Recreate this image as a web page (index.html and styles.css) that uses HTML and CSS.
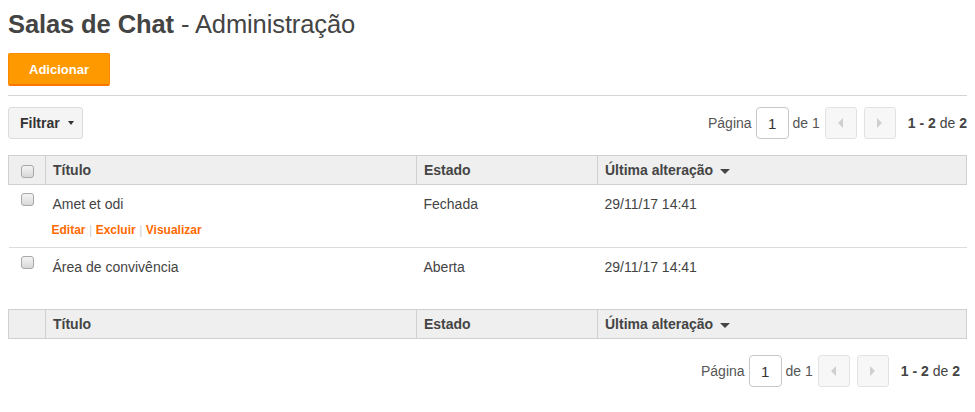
FILE: index.html
```html
<!DOCTYPE html>
<html lang="pt">
<head>
<meta charset="utf-8">
<title>Salas de Chat - Administração</title>
<link rel="stylesheet" href="styles.css">
</head>
<body>
<h1 class="title"><b>Salas de Chat</b> - Administração</h1>
<div class="actions-bar"><button class="btn-add">Adicionar</button></div>
<hr class="sep">
<div class="toolbar">
  <button class="btn-filter">Filtrar <span class="caret"></span></button>
  <div class="pager">
    <span class="lbl">Página</span>
    <span class="page-input">1</span>
    <span class="lbl">de 1</span>
    <span class="nav prev"><span class="tri-left"></span></span>
    <span class="nav next"><span class="tri-right"></span></span>
    <span class="count"><b>1 - 2</b> de <b>2</b></span>
  </div>
</div>
<table class="grid">
  <thead>
    <tr>
      <th class="c-check"><span class="cb"></span></th>
      <th class="c-title">Título</th>
      <th class="c-state">Estado</th>
      <th class="c-date">Última alteração <span class="sort"></span></th>
    </tr>
  </thead>
  <tbody>
    <tr>
      <td class="c-check"><span class="cb"></span></td>
      <td class="c-title">
        <div class="line">Amet et odi</div>
        <div class="row-actions"><a>Editar</a><span class="bar">|</span><a>Excluir</a><span class="bar">|</span><a>Visualizar</a></div>
      </td>
      <td><div class="line">Fechada</div></td>
      <td><div class="line">29/11/17 14:41</div></td>
    </tr>
    <tr class="last">
      <td class="c-check"><span class="cb"></span></td>
      <td class="c-title">
        <div class="line">Área de convivência</div>
        <div class="row-actions hidden"><a>Editar</a><span class="bar">|</span><a>Excluir</a><span class="bar">|</span><a>Visualizar</a></div>
      </td>
      <td><div class="line">Aberta</div></td>
      <td><div class="line">29/11/17 14:41</div></td>
    </tr>
  </tbody>
  <tfoot>
    <tr>
      <th class="c-check"></th>
      <th class="c-title">Título</th>
      <th class="c-state">Estado</th>
      <th class="c-date">Última alteração <span class="sort"></span></th>
    </tr>
  </tfoot>
</table>
<div class="toolbar bottom">
  <div class="pager">
    <span class="lbl">Página</span>
    <span class="page-input">1</span>
    <span class="lbl">de 1</span>
    <span class="nav prev"><span class="tri-left"></span></span>
    <span class="nav next"><span class="tri-right"></span></span>
    <span class="count"><b>1 - 2</b> de <b>2</b></span>
  </div>
</div>
</body>
</html>
```
FILE: styles.css
```css
html, body { background: #fff; }
body {
  margin: 8px;
  font-family: "Liberation Sans", Arial, sans-serif;
  color: #444;
  font-size: 14px;
}
.title {
  margin: 0;
  font-size: 25.5px;
  line-height: 32px;
  font-weight: normal;
  color: #444;
  letter-spacing: -0.1px;
}
.title b { font-weight: bold; color: #444; }
.actions-bar { margin-top: 13px; }
.btn-add {
  display: block;
  width: 102px;
  height: 33px;
  background: #ff9900;
  border: 1px solid #fb8a00;
  border-bottom: 2px solid #ff7400;
  border-radius: 2px;
  color: #fff;
  font-family: "Liberation Sans", Arial, sans-serif;
  font-weight: bold;
  font-size: 13px;
  padding: 0;
}
.sep {
  margin: 9px 0 0;
  border: 0;
  border-top: 1px solid #d4d4d4;
  height: 0;
}
.toolbar {
  display: flex;
  align-items: center;
  margin-top: 11px;
  height: 32px;
}
.btn-filter {
  display: flex;
  align-items: center;
  gap: 8px;
  height: 32px;
  width: 75px;
  padding: 0 0 0 11px;
  background: #f4f4f4;
  border: 1px solid #dcdcdc;
  border-radius: 3px;
  font-family: "Liberation Sans", Arial, sans-serif;
  font-weight: bold;
  font-size: 14px;
  color: #333;
}
.caret {
  width: 0; height: 0;
  border-left: 3px solid transparent;
  border-right: 3px solid transparent;
  border-top: 4px solid #333;
}
.pager {
  margin-left: auto;
  display: flex;
  align-items: center;
  color: #555;
}
.page-input {
  margin: 0 4px;
  box-sizing: border-box;
  width: 33px;
  height: 32px;
  border: 1px solid #c8c8c8;
  border-radius: 4px;
  display: flex;
  align-items: center;
  justify-content: center;
  font-size: 15px;
  color: #333;
}
.nav {
  box-sizing: border-box;
  width: 32px;
  height: 32px;
  border: 1px solid #e2e2e2;
  border-radius: 3px;
  background: #f7f7f7;
  display: flex;
  align-items: center;
  justify-content: center;
}
.prev { margin-left: 5px; }
.next { margin-left: 7px; }
.tri-left {
  width: 0; height: 0;
  border-top: 5px solid transparent;
  border-bottom: 5px solid transparent;
  border-right: 5px solid #cfcfcf;
}
.tri-right {
  width: 0; height: 0;
  border-top: 5px solid transparent;
  border-bottom: 5px solid transparent;
  border-left: 5px solid #cfcfcf;
}
.count { margin-left: 12px; color: #444; }
.count b { color: #444; }
.grid {
  margin-top: 16px;
  width: 100%;
  border-collapse: collapse;
}
.grid th {
  background: #efefef;
  border: 1px solid #cfcfcf;
  text-align: left;
  font-weight: bold;
  color: #444;
  height: 29px;
  padding: 0 7px;
  box-sizing: border-box;
  font-size: 14px;
}
.grid th.c-check { width: 37px; padding: 0; text-align: center; }
.grid th.c-title { width: 371px; }
.grid th.c-state { width: 181px; }
.grid td {
  vertical-align: top;
  padding: 9px 7px 9px;
  border-bottom: 1px solid #dcdcdc;
  color: #444;
}
.grid td.c-check { padding: 8px 0 0; text-align: center; }
.grid tr.last td { border-bottom: 0; padding-bottom: 8px; }
.grid tr.last td.c-check { padding-bottom: 0; }
.line { line-height: 21px; height: 21px; }
.row-actions {
  margin-top: 7px;
  line-height: 16px;
  font-size: 12px;
  font-weight: bold;
  margin-left: -1px;
}
.row-actions a { color: #ff6a00; }
.row-actions .bar { color: #d0d0d0; font-weight: normal; margin: 0 3.5px; }
.hidden { visibility: hidden; }
.cb {
  display: inline-block;
  box-sizing: border-box;
  width: 13px;
  height: 13px;
  border: 1px solid #a8a8a8;
  border-radius: 3px;
  background: linear-gradient(#f4f4f4, #d8d8d8);
  vertical-align: top;
}
th .cb { vertical-align: middle; margin-top: 1px; }
.sort {
  display: inline-block;
  width: 0; height: 0;
  border-left: 5px solid transparent;
  border-right: 5px solid transparent;
  border-top: 5px solid #444;
  vertical-align: middle;
  margin-left: 3px;
}
.toolbar.bottom { margin-top: 16px; padding-right: 7px; }
```
